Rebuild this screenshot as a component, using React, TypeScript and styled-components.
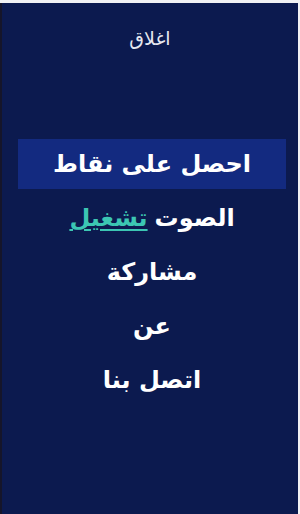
import styled, { createGlobalStyle } from "styled-components";

const GlobalStyle = createGlobalStyle`
    html, body {
        margin: 0;
        padding: 0;
        background-color: #f2f2f4;
    }
    #root {
        height: 514px;
    }
`;

const Drawer = styled.nav`
    box-sizing: border-box;
    height: 511px;
    margin-top: 3px;
    width: 298px;
    background-color: #0c1a4f;
    border-left: 2px solid #15152a;
    direction: rtl;
    font-family: "DejaVu Sans", "Noto Sans", sans-serif;
    color: #ffffff;
    display: flex;
    flex-direction: column;
`;

const CloseLink = styled.a`
    display: block;
    text-align: center;
    font-size: 19px;
    color: #e6e8f0;
    padding-top: 24px;
    height: 136px;
    box-sizing: border-box;
    cursor: pointer;
`;

const MenuList = styled.ul`
    list-style: none;
    margin: 0;
    padding: 0;
    display: flex;
    flex-direction: column;
    gap: 4px;
`;

const MenuItem = styled.li<{ $active?: boolean }>`
    height: 50px;
    margin: 0 12px 0 16px;
    display: flex;
    align-items: center;
    justify-content: center;
    font-size: 24px;
    font-weight: 700;
    background-color: ${(p) => (p.$active ? "#132a80" : "transparent")};
`;

const Toggle = styled.span`
    color: #3cc6b3;
    text-decoration: underline;
    text-underline-offset: 3px;
    margin-right: 7px;
`;

export default function App() {
    return (
        <>
            <GlobalStyle />
            <Drawer>
                <CloseLink>اغلاق</CloseLink>
                <MenuList>
                    <MenuItem $active>احصل على نقاط</MenuItem>
                    <MenuItem>
                        <span>الصوت</span>
                        <Toggle>تشغيل</Toggle>
                    </MenuItem>
                    <MenuItem>مشاركة</MenuItem>
                    <MenuItem>عن</MenuItem>
                    <MenuItem>اتصل بنا</MenuItem>
                </MenuList>
            </Drawer>
        </>
    );
}
